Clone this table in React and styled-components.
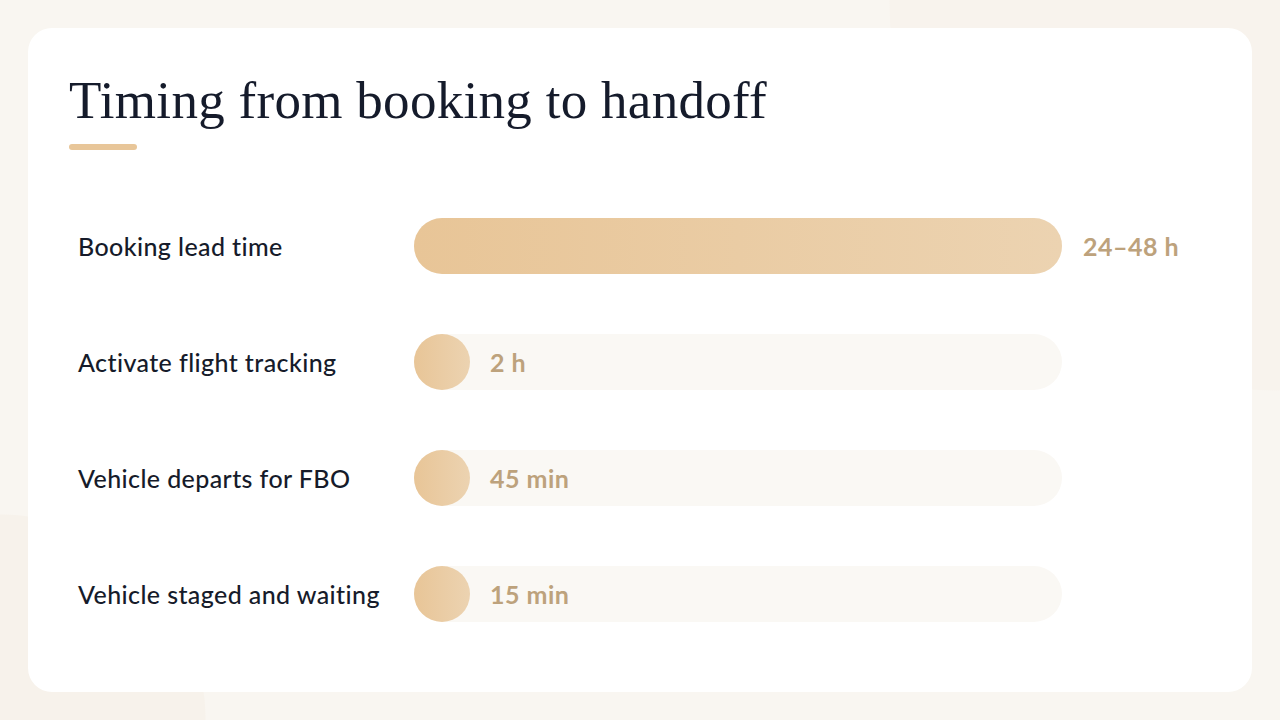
import React from 'react'
import styled, { createGlobalStyle } from 'styled-components'

const GlobalStyle = createGlobalStyle`
  html, body {
    margin: 0;
    padding: 0;
  }
  body {
    background-color: #f9f6f1;
    background-image:
      radial-gradient(circle at 100% 0%, #f8f3ed 0, #f8f3ed 390px, transparent 391px),
      radial-gradient(circle at 0% 100%, #f7f2eb 0, #f7f2eb 205px, transparent 206px);
    background-repeat: no-repeat;
    min-height: 100vh;
  }
`

const steps = [
  { label: 'Booking lead time', value: '24–48 h', full: true },
  { label: 'Activate flight tracking', value: '2 h' },
  { label: 'Vehicle departs for FBO', value: '45 min' },
  { label: 'Vehicle staged and waiting', value: '15 min' },
]

const App = () => {
  return (
    <Page>
      <GlobalStyle />
      <Card>
        <Title>Timing from booking to handoff</Title>
        <Accent />
        <Rows>
          {steps.map((s) => (
            <Row key={s.label}>
              <Label>{s.label}</Label>
              <BarArea>
                <Track>
                  <Fill $full={s.full} />
                  {!s.full && <Value $inside>{s.value}</Value>}
                </Track>
                {s.full && <Value>{s.value}</Value>}
              </BarArea>
            </Row>
          ))}
        </Rows>
      </Card>
    </Page>
  )
}

export default App

const Page = styled.div`
  box-sizing: border-box;
  height: 720px;
  padding: 28px;
  display: flex;
`

const Card = styled.div`
  flex: 1;
  box-sizing: border-box;
  background: #ffffff;
  border-radius: 24px;
  padding: 44px 41px 0;
  display: flex;
  flex-direction: column;
`

const Title = styled.h1`
  margin: 0;
  font-family: 'Liberation Serif', 'DejaVu Serif', serif;
  font-weight: 400;
  font-size: 53px;
  line-height: 56px;
  color: #151b2b;
  letter-spacing: 0.3px;
`

const Accent = styled.div`
  width: 68px;
  height: 6px;
  border-radius: 3px;
  background: #e8c699;
  margin-top: 16px;
`

const Rows = styled.div`
  display: flex;
  flex-direction: column;
  gap: 60px;
  margin-top: 68px;
  padding-left: 9px;
`

const Row = styled.div`
  display: grid;
  grid-template-columns: 336px 1fr;
  align-items: center;
  height: 56px;
`

const Label = styled.div`
  font-family: 'Lato', 'Noto Sans', sans-serif;
  font-size: 25px;
  font-weight: 500;
  letter-spacing: 0.4px;
  color: #161b2a;
  white-space: nowrap;
`

const BarArea = styled.div`
  display: flex;
  align-items: center;
  gap: 21px;
`

const Track = styled.div`
  width: 648px;
  height: 56px;
  border-radius: 28px;
  background: #faf8f4;
  display: flex;
  align-items: center;
`

const Fill = styled.div`
  width: ${(p) => (p.$full ? '100%' : '56px')};
  height: 56px;
  border-radius: 28px;
  flex-shrink: 0;
  background: linear-gradient(90deg, #e8c597 0%, #ecd3b1 100%);
`

const Value = styled.div`
  font-family: 'Lato', 'Noto Sans', sans-serif;
  font-size: 25px;
  font-weight: 700;
  letter-spacing: 0.5px;
  color: #bda27c;
  margin-left: ${(p) => (p.$inside ? '20px' : '0')};
  white-space: nowrap;
`
